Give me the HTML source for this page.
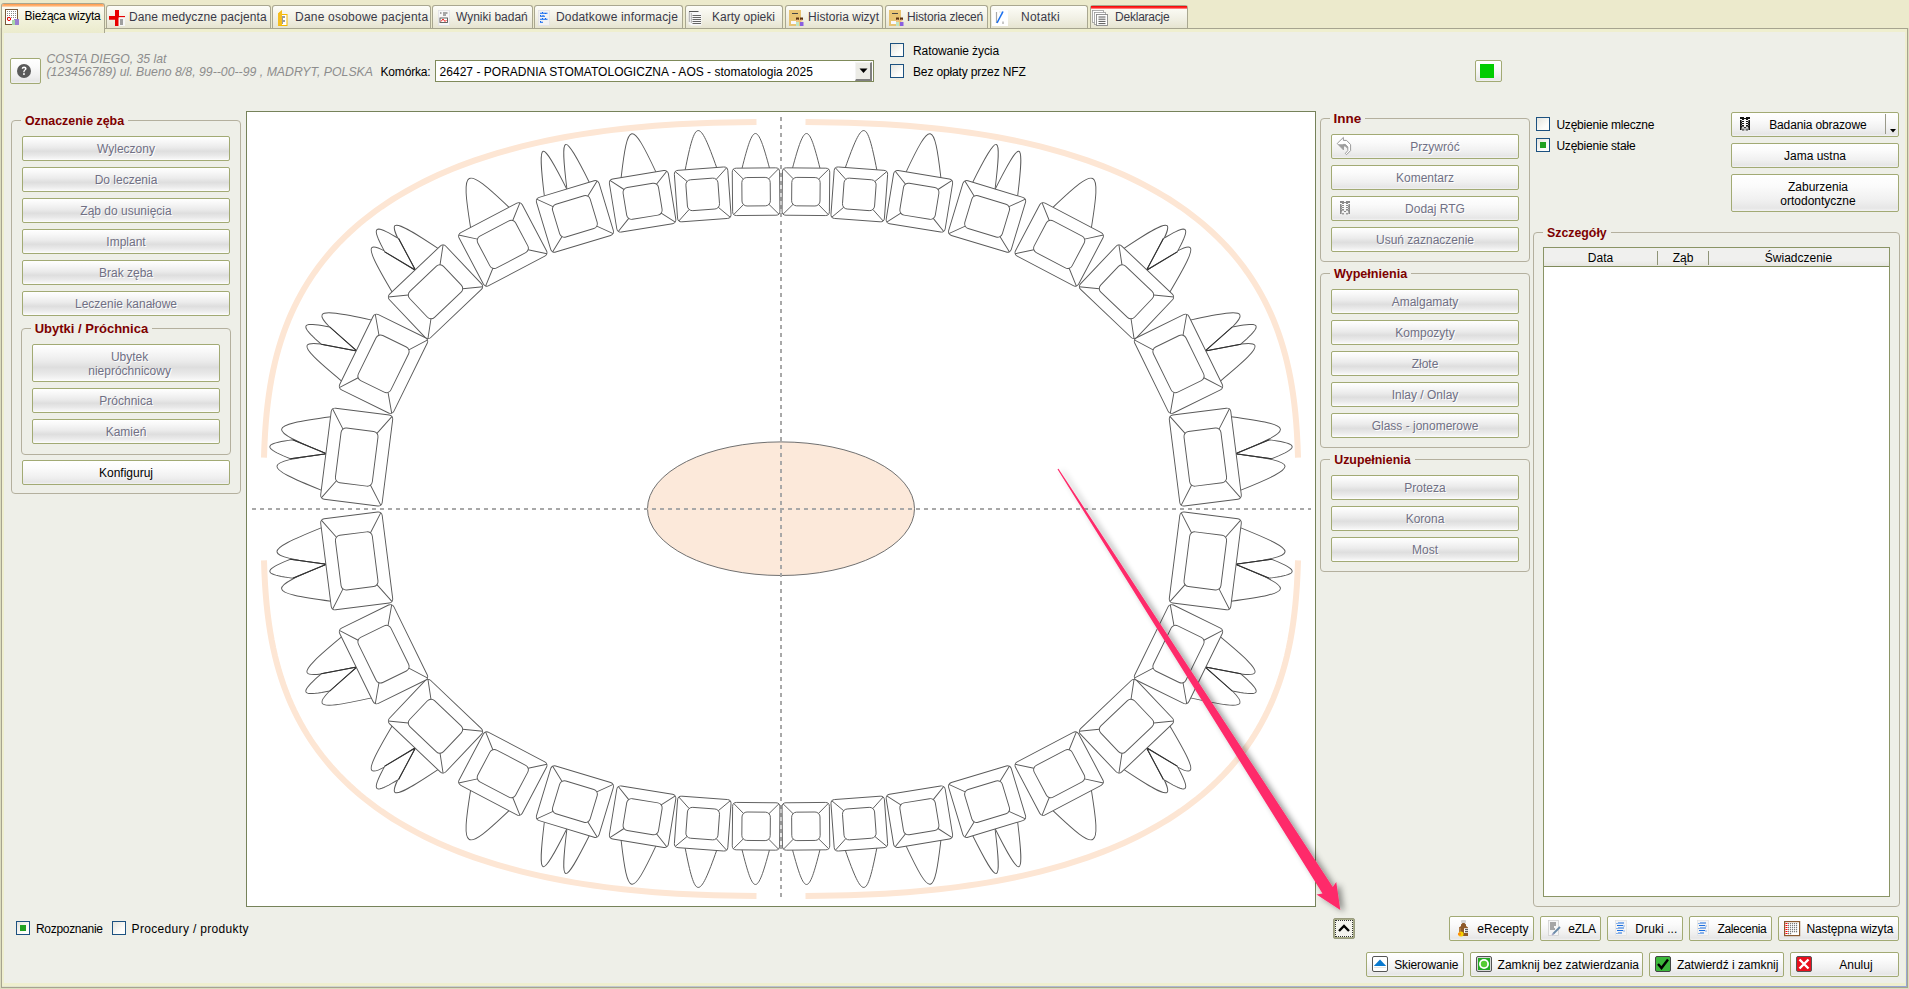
<!DOCTYPE html><html><head><meta charset="utf-8"><style>

*{margin:0;padding:0}
html,body{width:1909px;height:989px;overflow:hidden;background:#dcdcbe;font-family:"Liberation Sans", sans-serif}
.t{position:absolute;white-space:nowrap}
.strip{position:absolute;left:0;top:0;width:1909px;height:28px;background:#eceacc}
.frame{position:absolute;left:1px;top:28px;width:1907px;height:960px;box-sizing:border-box;border:1px solid #a6a48f;background:#efefcf}
.content{position:absolute;left:4px;top:32px;width:1901px;height:951px;background:#eeefe8}
.tab{position:absolute;box-sizing:border-box;border:1px solid #a9a790;border-bottom:none;border-radius:3px 3px 0 0;background:linear-gradient(#fdfdf8,#f0efe3 60%,#e6e4d0)}
.tabact{position:absolute;box-sizing:border-box;border:1px solid #a9a790;border-bottom:none;border-radius:3px 3px 0 0;background:linear-gradient(#fbfbf4 10%,#f2f2dc 50%,#ebebcd)}
.grp{position:absolute;box-sizing:border-box;border:1px solid #b4b09e;border-radius:4px}
.btn{position:absolute;box-sizing:border-box;border:1px solid #a2aa74;border-radius:2px}
.btn.dis{background:linear-gradient(#ffffff 0%,#f7f7f7 20%,#ebebeb 45%,#dedede 62%,#e9e9e9 80%,#f6f6f6 95%,#fff 100%)}
.btn.en{background:linear-gradient(#ffffff 0%,#fbfbfb 30%,#f0f0f0 70%,#e6e6e6 92%,#f2f2f2 100%)}
.chk{position:absolute;box-sizing:border-box;border:1px solid #1c5180;background:linear-gradient(135deg,#e4e4de,#fdfdfb 70%)}
.chkg{position:absolute;background:#21a121}
.white{position:absolute;box-sizing:border-box;border:1px solid #76825a;background:#fff}

</style></head><body>
<div class="strip"></div>
<div class="frame"></div>
<div class="content"></div>
<div style="position:absolute;left:2px;top:986px;width:1905px;height:1px;background:linear-gradient(90deg,rgba(150,165,210,0.15),rgba(150,165,210,0.6) 40%,#98a6d4)"></div>
<div style="position:absolute;left:1906px;top:300px;width:1px;height:687px;background:linear-gradient(rgba(150,165,210,0),#98a6d4)"></div>
<div class="tabact" style="left:1px;top:3px;width:104px;height:30px;"></div>
<div class="" style="left:2px;top:4px;width:102px;height:3px;position:absolute;background:linear-gradient(#ff9848,#ffb070 50%,#ffe0c0);border-radius:2px 2px 0 0"></div>
<div class="t" style="left:24.5px;top:9px;font-size:12px;line-height:14.4px;color:#000;font-weight:normal;font-style:normal;letter-spacing:-0.241px;">Bieżąca wizyta</div>
<div class="tab" style="left:106px;top:5px;width:165px;height:23px;"></div>
<div class="t" style="left:129px;top:10px;font-size:12px;line-height:14.4px;color:#3a3a48;font-weight:normal;font-style:normal;letter-spacing:0.104px;">Dane medyczne pacjenta</div>
<div class="tab" style="left:272px;top:5px;width:159px;height:23px;"></div>
<div class="t" style="left:295px;top:10px;font-size:12px;line-height:14.4px;color:#3a3a48;font-weight:normal;font-style:normal;letter-spacing:0.216px;">Dane osobowe pacjenta</div>
<div class="tab" style="left:432px;top:5px;width:101px;height:23px;"></div>
<div class="t" style="left:456px;top:10px;font-size:12px;line-height:14.4px;color:#3a3a48;font-weight:normal;font-style:normal;letter-spacing:-0.02px;">Wyniki badań</div>
<div class="tab" style="left:534px;top:5px;width:149px;height:23px;"></div>
<div class="t" style="left:556px;top:10px;font-size:12px;line-height:14.4px;color:#3a3a48;font-weight:normal;font-style:normal;letter-spacing:0.163px;">Dodatkowe informacje</div>
<div class="tab" style="left:685px;top:5px;width:98px;height:23px;"></div>
<div class="t" style="left:712px;top:10px;font-size:12px;line-height:14.4px;color:#3a3a48;font-weight:normal;font-style:normal;letter-spacing:0.025px;">Karty opieki</div>
<div class="tab" style="left:785px;top:5px;width:98px;height:23px;"></div>
<div class="t" style="left:808px;top:10px;font-size:12px;line-height:14.4px;color:#3a3a48;font-weight:normal;font-style:normal;letter-spacing:0.022px;">Historia wizyt</div>
<div class="tab" style="left:885px;top:5px;width:103px;height:23px;"></div>
<div class="t" style="left:907px;top:10px;font-size:12px;line-height:14.4px;color:#3a3a48;font-weight:normal;font-style:normal;letter-spacing:-0.18px;">Historia zleceń</div>
<div class="tab" style="left:990px;top:5px;width:98px;height:23px;"></div>
<div class="t" style="left:1021px;top:10px;font-size:12px;line-height:14.4px;color:#3a3a48;font-weight:normal;font-style:normal;letter-spacing:0.234px;">Notatki</div>
<div class="tab" style="left:1090px;top:5px;width:98px;height:23px;"></div>
<div class="" style="left:1091px;top:6px;width:96px;height:3px;position:absolute;background:linear-gradient(#f00000,#ff3030 60%,#ffb0b0)"></div>
<div class="t" style="left:1115px;top:10px;font-size:12px;line-height:14.4px;color:#3a3a48;font-weight:normal;font-style:normal;letter-spacing:-0.22px;">Deklaracje</div>
<div class="btn en" style="left:10px;top:58px;width:31px;height:26px;"></div>
<svg style="position:absolute;left:16px;top:63px" width="16" height="16"><circle cx="8" cy="8" r="7" fill="#5a5a5a"/><path d="M5.6 5.6Q5.8 3.4 8.1 3.4Q10.6 3.4 10.6 5.6Q10.6 6.9 9.2 7.6Q8.6 8 8.6 9.2H7.2Q7.2 7.5 8.1 6.9Q8.9 6.4 8.9 5.7Q8.9 4.9 8 4.9Q7.2 4.9 7.1 5.9Z" fill="#fff"/><rect x="7.1" y="10.2" width="1.7" height="1.7" fill="#fff"/></svg>
<div class="t" style="left:46.5px;top:52px;font-size:12.2px;line-height:14.64px;color:#8d8d8d;font-weight:normal;font-style:italic;">COSTA DIEGO, 35 lat</div>
<div class="t" style="left:46.5px;top:65px;font-size:12.3px;line-height:14.76px;color:#8d8d8d;font-weight:normal;font-style:italic;">(123456789) ul. Bueno 8/8, 99--00--99 , MADRYT, POLSKA</div>
<div class="t" style="left:380.5px;top:65px;font-size:12px;line-height:14.4px;color:#000;font-weight:normal;font-style:normal;letter-spacing:-0.17px;">Komórka:</div>
<div style="position:absolute;left:435px;top:60px;width:439px;height:22px;box-sizing:border-box;border:1px solid #7f8a5a;background:#fff"></div>
<div class="t" style="left:439.6px;top:65px;font-size:12px;line-height:14.4px;color:#000;font-weight:normal;font-style:normal;letter-spacing:0.02px;">26427 - PORADNIA STOMATOLOGICZNA - AOS - stomatologia 2025</div>
<div style="position:absolute;left:855px;top:62px;width:17px;height:19px;box-sizing:border-box;border-top:1px solid #f4f4f4;border-left:1px solid #f4f4f4;border-right:2px solid #808080;border-bottom:2px solid #808080;background:#ecece6"></div>
<svg style="position:absolute;left:859px;top:68px" width="10" height="6"><path d="M0.5 0.5H8.5L4.5 5z" fill="#000"/></svg>
<div class="chk" style="left:890px;top:43px;width:14px;height:14px;"></div>
<div class="t" style="left:913px;top:44px;font-size:12px;line-height:14.4px;color:#000;font-weight:normal;font-style:normal;letter-spacing:-0.092px;">Ratowanie życia</div>
<div class="chk" style="left:890px;top:64px;width:14px;height:14px;"></div>
<div class="t" style="left:913px;top:65px;font-size:12px;line-height:14.4px;color:#000;font-weight:normal;font-style:normal;letter-spacing:-0.139px;">Bez opłaty przez NFZ</div>
<div class="btn en" style="left:1475px;top:60px;width:27px;height:22px;"></div>
<div class="" style="left:1480px;top:64px;width:14px;height:14px;position:absolute;background:#00cc00"></div>
<div class="grp" style="left:11px;top:120px;width:230px;height:374px;"></div>
<div class="t" style="left:24.9px;top:114px;font-size:12.4px;line-height:14.88px;color:#7d0000;font-weight:bold;font-style:normal;background:#eeefe8;padding:0 4px;margin-left:-4px;">Oznaczenie zęba</div>
<div class="btn dis" style="left:22px;top:136px;width:208px;height:25px;"></div>
<div class="t" style="left:-74px;top:142px;width:400px;text-align:center;font-size:12px;line-height:14.4px;color:#707084;font-weight:normal;text-shadow:1px 1px 0 #fff;">Wyleczony</div>
<div class="btn dis" style="left:22px;top:167px;width:208px;height:25px;"></div>
<div class="t" style="left:-74px;top:173px;width:400px;text-align:center;font-size:12px;line-height:14.4px;color:#707084;font-weight:normal;text-shadow:1px 1px 0 #fff;">Do leczenia</div>
<div class="btn dis" style="left:22px;top:198px;width:208px;height:25px;"></div>
<div class="t" style="left:-74px;top:204px;width:400px;text-align:center;font-size:12px;line-height:14.4px;color:#707084;font-weight:normal;text-shadow:1px 1px 0 #fff;">Ząb do usunięcia</div>
<div class="btn dis" style="left:22px;top:229px;width:208px;height:25px;"></div>
<div class="t" style="left:-74px;top:235px;width:400px;text-align:center;font-size:12px;line-height:14.4px;color:#707084;font-weight:normal;text-shadow:1px 1px 0 #fff;">Implant</div>
<div class="btn dis" style="left:22px;top:260px;width:208px;height:25px;"></div>
<div class="t" style="left:-74px;top:266px;width:400px;text-align:center;font-size:12px;line-height:14.4px;color:#707084;font-weight:normal;text-shadow:1px 1px 0 #fff;">Brak zęba</div>
<div class="btn dis" style="left:22px;top:291px;width:208px;height:25px;"></div>
<div class="t" style="left:-74px;top:297px;width:400px;text-align:center;font-size:12px;line-height:14.4px;color:#707084;font-weight:normal;text-shadow:1px 1px 0 #fff;">Leczenie kanałowe</div>
<div class="grp" style="left:21px;top:328px;width:210px;height:127px;"></div>
<div class="t" style="left:34.7px;top:321px;font-size:13px;line-height:15.6px;color:#7d0000;font-weight:bold;font-style:normal;background:#eeefe8;padding:0 4px;margin-left:-4px;">Ubytki / Próchnica</div>
<div class="btn dis" style="left:32px;top:344px;width:188px;height:38px;"></div>
<div class="t" style="left:-70.4px;top:350px;width:400px;text-align:center;font-size:12px;line-height:14.4px;color:#707084;font-weight:normal;text-shadow:1px 1px 0 #fff;">Ubytek</div>
<div class="t" style="left:-70.4px;top:364px;width:400px;text-align:center;font-size:12px;line-height:14.4px;color:#707084;font-weight:normal;text-shadow:1px 1px 0 #fff;">niepróchnicowy</div>
<div class="btn dis" style="left:32px;top:388px;width:188px;height:25px;"></div>
<div class="t" style="left:-74px;top:394px;width:400px;text-align:center;font-size:12px;line-height:14.4px;color:#707084;font-weight:normal;text-shadow:1px 1px 0 #fff;">Próchnica</div>
<div class="btn dis" style="left:32px;top:419px;width:188px;height:25px;"></div>
<div class="t" style="left:-74px;top:425px;width:400px;text-align:center;font-size:12px;line-height:14.4px;color:#707084;font-weight:normal;text-shadow:1px 1px 0 #fff;">Kamień</div>
<div class="btn en" style="left:22px;top:460px;width:208px;height:25px;"></div>
<div class="t" style="left:-74px;top:466px;width:400px;text-align:center;font-size:12px;line-height:14.4px;color:#000;font-weight:normal;">Konfiguruj</div>
<div class="white" style="left:246px;top:111px;width:1070px;height:796px"></div>
<svg width="1909" height="989" style="position:absolute;left:0;top:0" viewBox="0 0 1909 989">
<style>.teeth path,.teeth rect{fill:#fff;stroke:#5a5a5a;stroke-width:0.95}.teeth .cl{fill:none}.teeth .mid{stroke:#303030;stroke-width:1;fill:none}</style>
<defs><filter id="sh" x="-20%" y="-20%" width="140%" height="140%"><feGaussianBlur in="SourceAlpha" stdDeviation="2.2"/><feOffset dx="3" dy="1" result="o"/><feComponentTransfer><feFuncA type="linear" slope="0.55"/></feComponentTransfer><feMerge><feMergeNode/><feMergeNode in="SourceGraphic"/></feMerge></filter></defs>
<path d="M263.99 457.6L264.43 445.08L265.03 433.7L265.77 423.14L266.65 413.22L267.68 403.81L268.86 394.82L270.18 386.21L271.64 377.91L273.25 369.89L275 362.14L276.9 354.61L278.94 347.31L281.13 340.2L283.45 333.27L285.92 326.52L288.54 319.93L291.29 313.51L294.19 307.22L297.23 301.09L300.41 295.09L303.73 289.22L307.19 283.48L310.79 277.87L314.53 272.37L318.41 267L322.43 261.73L326.58 256.59L330.88 251.55L335.31 246.62L339.87 241.8L344.58 237.08L349.42 232.47L354.39 227.96L359.5 223.55L364.75 219.24L370.13 215.03L375.64 210.92L381.28 206.9L387.06 202.99L392.97 199.16L399.02 195.44L405.19 191.81L411.5 188.27L417.93 184.83L424.5 181.48L431.2 178.23L438.04 175.07L445 172L452.09 169.03L459.32 166.14L466.68 163.35L474.17 160.65L481.79 158.04L489.54 155.53L497.43 153.1L505.46 150.77L513.62 148.53L521.93 146.38L530.37 144.32L538.95 142.35L547.68 140.47L556.56 138.69L565.6 136.99L574.79 135.39L584.14 133.87L593.66 132.45L603.35 131.12L613.23 129.88L623.31 128.73L633.6 127.67L644.11 126.7L654.86 125.82L665.89 125.03L677.22 124.34L688.9 123.73L700.99 123.22L713.58 122.79L726.82 122.46L740.94 122.22L756.5 122.06" fill="none" stroke="#fde6d4" stroke-width="6"/>
<path d="M263.99 457.6L264.43 445.08L265.03 433.7L265.77 423.14L266.65 413.22L267.68 403.81L268.86 394.82L270.18 386.21L271.64 377.91L273.25 369.89L275 362.14L276.9 354.61L278.94 347.31L281.13 340.2L283.45 333.27L285.92 326.52L288.54 319.93L291.29 313.51L294.19 307.22L297.23 301.09L300.41 295.09L303.73 289.22L307.19 283.48L310.79 277.87L314.53 272.37L318.41 267L322.43 261.73L326.58 256.59L330.88 251.55L335.31 246.62L339.87 241.8L344.58 237.08L349.42 232.47L354.39 227.96L359.5 223.55L364.75 219.24L370.13 215.03L375.64 210.92L381.28 206.9L387.06 202.99L392.97 199.16L399.02 195.44L405.19 191.81L411.5 188.27L417.93 184.83L424.5 181.48L431.2 178.23L438.04 175.07L445 172L452.09 169.03L459.32 166.14L466.68 163.35L474.17 160.65L481.79 158.04L489.54 155.53L497.43 153.1L505.46 150.77L513.62 148.53L521.93 146.38L530.37 144.32L538.95 142.35L547.68 140.47L556.56 138.69L565.6 136.99L574.79 135.39L584.14 133.87L593.66 132.45L603.35 131.12L613.23 129.88L623.31 128.73L633.6 127.67L644.11 126.7L654.86 125.82L665.89 125.03L677.22 124.34L688.9 123.73L700.99 123.22L713.58 122.79L726.82 122.46L740.94 122.22L756.5 122.06" fill="none" stroke="#fde6d4" stroke-width="6" transform="matrix(-1 0 0 1 1562 0)"/>
<path d="M263.99 457.6L264.43 445.08L265.03 433.7L265.77 423.14L266.65 413.22L267.68 403.81L268.86 394.82L270.18 386.21L271.64 377.91L273.25 369.89L275 362.14L276.9 354.61L278.94 347.31L281.13 340.2L283.45 333.27L285.92 326.52L288.54 319.93L291.29 313.51L294.19 307.22L297.23 301.09L300.41 295.09L303.73 289.22L307.19 283.48L310.79 277.87L314.53 272.37L318.41 267L322.43 261.73L326.58 256.59L330.88 251.55L335.31 246.62L339.87 241.8L344.58 237.08L349.42 232.47L354.39 227.96L359.5 223.55L364.75 219.24L370.13 215.03L375.64 210.92L381.28 206.9L387.06 202.99L392.97 199.16L399.02 195.44L405.19 191.81L411.5 188.27L417.93 184.83L424.5 181.48L431.2 178.23L438.04 175.07L445 172L452.09 169.03L459.32 166.14L466.68 163.35L474.17 160.65L481.79 158.04L489.54 155.53L497.43 153.1L505.46 150.77L513.62 148.53L521.93 146.38L530.37 144.32L538.95 142.35L547.68 140.47L556.56 138.69L565.6 136.99L574.79 135.39L584.14 133.87L593.66 132.45L603.35 131.12L613.23 129.88L623.31 128.73L633.6 127.67L644.11 126.7L654.86 125.82L665.89 125.03L677.22 124.34L688.9 123.73L700.99 123.22L713.58 122.79L726.82 122.46L740.94 122.22L756.5 122.06" fill="none" stroke="#fde6d4" stroke-width="6" transform="matrix(1 0 0 -1 0 1018)"/>
<path d="M263.99 457.6L264.43 445.08L265.03 433.7L265.77 423.14L266.65 413.22L267.68 403.81L268.86 394.82L270.18 386.21L271.64 377.91L273.25 369.89L275 362.14L276.9 354.61L278.94 347.31L281.13 340.2L283.45 333.27L285.92 326.52L288.54 319.93L291.29 313.51L294.19 307.22L297.23 301.09L300.41 295.09L303.73 289.22L307.19 283.48L310.79 277.87L314.53 272.37L318.41 267L322.43 261.73L326.58 256.59L330.88 251.55L335.31 246.62L339.87 241.8L344.58 237.08L349.42 232.47L354.39 227.96L359.5 223.55L364.75 219.24L370.13 215.03L375.64 210.92L381.28 206.9L387.06 202.99L392.97 199.16L399.02 195.44L405.19 191.81L411.5 188.27L417.93 184.83L424.5 181.48L431.2 178.23L438.04 175.07L445 172L452.09 169.03L459.32 166.14L466.68 163.35L474.17 160.65L481.79 158.04L489.54 155.53L497.43 153.1L505.46 150.77L513.62 148.53L521.93 146.38L530.37 144.32L538.95 142.35L547.68 140.47L556.56 138.69L565.6 136.99L574.79 135.39L584.14 133.87L593.66 132.45L603.35 131.12L613.23 129.88L623.31 128.73L633.6 127.67L644.11 126.7L654.86 125.82L665.89 125.03L677.22 124.34L688.9 123.73L700.99 123.22L713.58 122.79L726.82 122.46L740.94 122.22L756.5 122.06" fill="none" stroke="#fde6d4" stroke-width="6" transform="matrix(-1 0 0 -1 1562 1018)"/>
<ellipse cx="781" cy="508.7" rx="133.5" ry="66.8" fill="#fce9da" stroke="#707070" stroke-width="1"/>
<line x1="252" y1="509" x2="1311" y2="509" stroke="#a8a8a8" stroke-width="2" stroke-dasharray="4 4"/>
<line x1="781" y1="117" x2="781" y2="897" stroke="#a8a8a8" stroke-width="2" stroke-dasharray="4 4"/>
<g class="teeth">
<g><g transform="translate(756.1 191.7) rotate(-0.5)"><g class="root"><path d="M-13.95 -23.2C-1.95 -69.87 1.65 -69.87 13.65 -23.2"/></g><g class="crown"><rect x="-23.65" y="-23.7" width="47.3" height="47.4" rx="4"/><rect x="-14.19" y="-14.22" width="28.38" height="28.44" rx="5"/><path class="cl" d="M-22.65 -22.7L-12.69 -12.72M-22.65 22.7L-12.69 12.72M22.65 -22.7L12.69 -12.72M22.65 22.7L12.69 12.72"/></g></g><g transform="translate(702.7 194.4) rotate(-4.2)"><g class="root"><path d="M-15.8 -25.3C-1.7 -76.9 1.9 -76.9 16 -25.3"/></g><g class="crown"><rect x="-26.8" y="-25.8" width="53.6" height="51.6" rx="4"/><rect x="-16.08" y="-15.48" width="32.16" height="30.96" rx="5"/><path class="cl" d="M-25.8 -24.8L-14.58 -13.98M-25.8 24.8L-14.58 13.98M25.8 -24.8L14.58 -13.98M25.8 24.8L14.58 13.98"/></g></g><g transform="translate(642.6 201.3) rotate(-9.3)"><g class="root"><path d="M-17.5 -26.4C-1.55 -82.4 2.05 -82.4 18 -26.4"/></g><g class="crown"><rect x="-29.9" y="-26.9" width="59.8" height="53.8" rx="4"/><rect x="-17.94" y="-16.14" width="35.88" height="32.28" rx="5"/><path class="cl" d="M-28.9 -25.9L-16.44 -14.64M-28.9 25.9L-16.44 14.64M28.9 -25.9L16.44 -14.64M28.9 25.9L16.44 14.64"/></g></g><g transform="translate(574.9 216.4) rotate(-16.8)"><g class="root"><path d="M-23.4 -28.05C-13.4 -86.05 -9.8 -86.05 0.2 -28.05"/><path d="M0.2 -28.05C10.15 -86.05 13.75 -86.05 23.7 -28.05"/></g><g class="crown"><rect x="-32.7" y="-28.55" width="65.4" height="57.1" rx="4"/><rect x="-19.62" y="-17.13" width="39.24" height="34.26" rx="5"/><path class="cl" d="M-31.7 -27.55L-18.12 -15.63M-31.7 27.55L-18.12 15.63M31.7 -27.55L18.12 -15.63M31.7 27.55L18.12 15.63"/></g></g><g transform="translate(502.8 244.4) rotate(-27.8)"><g class="root"><path d="M-20.8 -29.45C-0.75 -88.78 2.85 -88.78 22.9 -29.45"/></g><g class="crown"><rect x="-35.7" y="-29.95" width="71.4" height="59.9" rx="4"/><rect x="-21.42" y="-17.97" width="42.84" height="35.94" rx="5"/><path class="cl" d="M-34.7 -28.95L-19.92 -16.47M-34.7 28.95L-19.92 16.47M34.7 -28.95L19.92 -16.47M34.7 28.95L19.92 16.47"/></g></g><g transform="translate(435.5 291.8) rotate(-43.5)"><g class="root"><path d="M-31.7 -29.4C-17.5 -91.4 -13.9 -91.4 0.3 -29.4"/><path d="M0.3 -29.4C14.25 -91.4 17.85 -91.4 31.8 -29.4"/><path d="M0.3 -29.4L-9.29 -63.87L-8.16 -67.96L-7.09 -71.62L-6.06 -74.85L-5.07 -77.65L-4.12 -80.02L-3.2 -81.96L-2.31 -83.46L-1.43 -84.54L-0.56 -85.18L0.3 -85.4L1.16 -85.18L2.03 -84.54L2.91 -83.46L3.8 -81.96L4.72 -80.02L5.67 -77.65L6.66 -74.85L7.69 -71.62L8.76 -67.96L9.89 -63.87Z"/><path class="mid" d="M-9.29 -63.87L0.3 -29.4M0.3 -29.4L9.89 -63.87"/></g><g class="crown"><rect x="-38.9" y="-29.9" width="77.8" height="59.8" rx="4"/><rect x="-23.34" y="-17.94" width="46.68" height="35.88" rx="5"/><path class="cl" d="M-37.9 -28.9L-21.84 -16.44M-37.9 28.9L-21.84 16.44M37.9 -28.9L21.84 -16.44M37.9 28.9L21.84 16.44"/></g></g><g transform="translate(383.5 363.8) rotate(-63.9)"><g class="root"><path d="M-34 -29.7C-18.9 -92.37 -15.3 -92.37 -0.2 -29.7"/><path d="M-0.2 -29.7C15.15 -92.37 18.75 -92.37 34.1 -29.7"/><path d="M-0.2 -29.7L-9.79 -64.48L-8.66 -68.61L-7.59 -72.3L-6.56 -75.56L-5.57 -78.38L-4.62 -80.77L-3.7 -82.73L-2.81 -84.25L-1.93 -85.33L-1.06 -85.98L-0.2 -86.2L0.66 -85.98L1.53 -85.33L2.41 -84.25L3.3 -82.73L4.22 -80.77L5.17 -78.38L6.16 -75.56L7.19 -72.3L8.26 -68.61L9.39 -64.48Z"/><path class="mid" d="M-9.79 -64.48L-0.2 -29.7M-0.2 -29.7L9.39 -64.48"/></g><g class="crown"><rect x="-41.9" y="-30.2" width="83.8" height="60.4" rx="4"/><rect x="-25.14" y="-18.12" width="50.28" height="36.24" rx="5"/><path class="cl" d="M-40.9 -29.2L-23.64 -16.62M-40.9 29.2L-23.64 16.62M40.9 -29.2L23.64 -16.62M40.9 29.2L23.64 16.62"/></g></g><g transform="translate(356.7 457.1) rotate(-82.8)"><g class="root"><path d="M-37.4 -30.5C-20.7 -93.83 -17.1 -93.83 -0.4 -30.5"/><path d="M-0.4 -30.5C16.4 -93.83 20 -93.83 36.8 -30.5"/><path d="M-0.4 -30.5L-9.99 -65.59L-8.86 -69.75L-7.79 -73.48L-6.76 -76.76L-5.77 -79.61L-4.82 -82.02L-3.9 -83.99L-3.01 -85.53L-2.13 -86.62L-1.26 -87.28L-0.4 -87.5L0.46 -87.28L1.33 -86.62L2.21 -85.53L3.1 -83.99L4.02 -82.02L4.97 -79.61L5.96 -76.76L6.99 -73.48L8.06 -69.75L9.19 -65.59Z"/><path class="mid" d="M-9.99 -65.59L-0.4 -30.5M-0.4 -30.5L9.19 -65.59"/></g><g class="crown"><rect x="-45.9" y="-31" width="91.8" height="62" rx="4"/><rect x="-27.54" y="-18.6" width="55.08" height="37.2" rx="5"/><path class="cl" d="M-44.9 -30L-26.04 -17.1M-44.9 30L-26.04 17.1M44.9 -30L26.04 -17.1M44.9 30L26.04 17.1"/></g></g></g>
<g transform="matrix(-1 0 0 1 1562 0)"><g transform="translate(756.1 191.7) rotate(-0.5)"><g class="root"><path d="M-13.95 -23.2C-1.95 -69.87 1.65 -69.87 13.65 -23.2"/></g><g class="crown"><rect x="-23.65" y="-23.7" width="47.3" height="47.4" rx="4"/><rect x="-14.19" y="-14.22" width="28.38" height="28.44" rx="5"/><path class="cl" d="M-22.65 -22.7L-12.69 -12.72M-22.65 22.7L-12.69 12.72M22.65 -22.7L12.69 -12.72M22.65 22.7L12.69 12.72"/></g></g><g transform="translate(702.7 194.4) rotate(-4.2)"><g class="root"><path d="M-15.8 -25.3C-1.7 -76.9 1.9 -76.9 16 -25.3"/></g><g class="crown"><rect x="-26.8" y="-25.8" width="53.6" height="51.6" rx="4"/><rect x="-16.08" y="-15.48" width="32.16" height="30.96" rx="5"/><path class="cl" d="M-25.8 -24.8L-14.58 -13.98M-25.8 24.8L-14.58 13.98M25.8 -24.8L14.58 -13.98M25.8 24.8L14.58 13.98"/></g></g><g transform="translate(642.6 201.3) rotate(-9.3)"><g class="root"><path d="M-17.5 -26.4C-1.55 -82.4 2.05 -82.4 18 -26.4"/></g><g class="crown"><rect x="-29.9" y="-26.9" width="59.8" height="53.8" rx="4"/><rect x="-17.94" y="-16.14" width="35.88" height="32.28" rx="5"/><path class="cl" d="M-28.9 -25.9L-16.44 -14.64M-28.9 25.9L-16.44 14.64M28.9 -25.9L16.44 -14.64M28.9 25.9L16.44 14.64"/></g></g><g transform="translate(574.9 216.4) rotate(-16.8)"><g class="root"><path d="M-23.4 -28.05C-13.4 -86.05 -9.8 -86.05 0.2 -28.05"/><path d="M0.2 -28.05C10.15 -86.05 13.75 -86.05 23.7 -28.05"/></g><g class="crown"><rect x="-32.7" y="-28.55" width="65.4" height="57.1" rx="4"/><rect x="-19.62" y="-17.13" width="39.24" height="34.26" rx="5"/><path class="cl" d="M-31.7 -27.55L-18.12 -15.63M-31.7 27.55L-18.12 15.63M31.7 -27.55L18.12 -15.63M31.7 27.55L18.12 15.63"/></g></g><g transform="translate(502.8 244.4) rotate(-27.8)"><g class="root"><path d="M-20.8 -29.45C-0.75 -88.78 2.85 -88.78 22.9 -29.45"/></g><g class="crown"><rect x="-35.7" y="-29.95" width="71.4" height="59.9" rx="4"/><rect x="-21.42" y="-17.97" width="42.84" height="35.94" rx="5"/><path class="cl" d="M-34.7 -28.95L-19.92 -16.47M-34.7 28.95L-19.92 16.47M34.7 -28.95L19.92 -16.47M34.7 28.95L19.92 16.47"/></g></g><g transform="translate(435.5 291.8) rotate(-43.5)"><g class="root"><path d="M-31.7 -29.4C-17.5 -91.4 -13.9 -91.4 0.3 -29.4"/><path d="M0.3 -29.4C14.25 -91.4 17.85 -91.4 31.8 -29.4"/><path d="M0.3 -29.4L-9.29 -63.87L-8.16 -67.96L-7.09 -71.62L-6.06 -74.85L-5.07 -77.65L-4.12 -80.02L-3.2 -81.96L-2.31 -83.46L-1.43 -84.54L-0.56 -85.18L0.3 -85.4L1.16 -85.18L2.03 -84.54L2.91 -83.46L3.8 -81.96L4.72 -80.02L5.67 -77.65L6.66 -74.85L7.69 -71.62L8.76 -67.96L9.89 -63.87Z"/><path class="mid" d="M-9.29 -63.87L0.3 -29.4M0.3 -29.4L9.89 -63.87"/></g><g class="crown"><rect x="-38.9" y="-29.9" width="77.8" height="59.8" rx="4"/><rect x="-23.34" y="-17.94" width="46.68" height="35.88" rx="5"/><path class="cl" d="M-37.9 -28.9L-21.84 -16.44M-37.9 28.9L-21.84 16.44M37.9 -28.9L21.84 -16.44M37.9 28.9L21.84 16.44"/></g></g><g transform="translate(383.5 363.8) rotate(-63.9)"><g class="root"><path d="M-34 -29.7C-18.9 -92.37 -15.3 -92.37 -0.2 -29.7"/><path d="M-0.2 -29.7C15.15 -92.37 18.75 -92.37 34.1 -29.7"/><path d="M-0.2 -29.7L-9.79 -64.48L-8.66 -68.61L-7.59 -72.3L-6.56 -75.56L-5.57 -78.38L-4.62 -80.77L-3.7 -82.73L-2.81 -84.25L-1.93 -85.33L-1.06 -85.98L-0.2 -86.2L0.66 -85.98L1.53 -85.33L2.41 -84.25L3.3 -82.73L4.22 -80.77L5.17 -78.38L6.16 -75.56L7.19 -72.3L8.26 -68.61L9.39 -64.48Z"/><path class="mid" d="M-9.79 -64.48L-0.2 -29.7M-0.2 -29.7L9.39 -64.48"/></g><g class="crown"><rect x="-41.9" y="-30.2" width="83.8" height="60.4" rx="4"/><rect x="-25.14" y="-18.12" width="50.28" height="36.24" rx="5"/><path class="cl" d="M-40.9 -29.2L-23.64 -16.62M-40.9 29.2L-23.64 16.62M40.9 -29.2L23.64 -16.62M40.9 29.2L23.64 16.62"/></g></g><g transform="translate(356.7 457.1) rotate(-82.8)"><g class="root"><path d="M-37.4 -30.5C-20.7 -93.83 -17.1 -93.83 -0.4 -30.5"/><path d="M-0.4 -30.5C16.4 -93.83 20 -93.83 36.8 -30.5"/><path d="M-0.4 -30.5L-9.99 -65.59L-8.86 -69.75L-7.79 -73.48L-6.76 -76.76L-5.77 -79.61L-4.82 -82.02L-3.9 -83.99L-3.01 -85.53L-2.13 -86.62L-1.26 -87.28L-0.4 -87.5L0.46 -87.28L1.33 -86.62L2.21 -85.53L3.1 -83.99L4.02 -82.02L4.97 -79.61L5.96 -76.76L6.99 -73.48L8.06 -69.75L9.19 -65.59Z"/><path class="mid" d="M-9.99 -65.59L-0.4 -30.5M-0.4 -30.5L9.19 -65.59"/></g><g class="crown"><rect x="-45.9" y="-31" width="91.8" height="62" rx="4"/><rect x="-27.54" y="-18.6" width="55.08" height="37.2" rx="5"/><path class="cl" d="M-44.9 -30L-26.04 -17.1M-44.9 30L-26.04 17.1M44.9 -30L26.04 -17.1M44.9 30L26.04 17.1"/></g></g></g>
<g transform="matrix(1 0 0 -1 0 1018)"><g transform="translate(756.1 191.7) rotate(-0.5)"><g class="root"><path d="M-13.95 -23.2C-1.95 -69.87 1.65 -69.87 13.65 -23.2"/></g><g class="crown"><rect x="-23.65" y="-23.7" width="47.3" height="47.4" rx="4"/><rect x="-14.19" y="-14.22" width="28.38" height="28.44" rx="5"/><path class="cl" d="M-22.65 -22.7L-12.69 -12.72M-22.65 22.7L-12.69 12.72M22.65 -22.7L12.69 -12.72M22.65 22.7L12.69 12.72"/></g></g><g transform="translate(702.7 194.4) rotate(-4.2)"><g class="root"><path d="M-15.8 -25.3C-1.7 -76.9 1.9 -76.9 16 -25.3"/></g><g class="crown"><rect x="-26.8" y="-25.8" width="53.6" height="51.6" rx="4"/><rect x="-16.08" y="-15.48" width="32.16" height="30.96" rx="5"/><path class="cl" d="M-25.8 -24.8L-14.58 -13.98M-25.8 24.8L-14.58 13.98M25.8 -24.8L14.58 -13.98M25.8 24.8L14.58 13.98"/></g></g><g transform="translate(642.6 201.3) rotate(-9.3)"><g class="root"><path d="M-17.5 -26.4C-1.55 -82.4 2.05 -82.4 18 -26.4"/></g><g class="crown"><rect x="-29.9" y="-26.9" width="59.8" height="53.8" rx="4"/><rect x="-17.94" y="-16.14" width="35.88" height="32.28" rx="5"/><path class="cl" d="M-28.9 -25.9L-16.44 -14.64M-28.9 25.9L-16.44 14.64M28.9 -25.9L16.44 -14.64M28.9 25.9L16.44 14.64"/></g></g><g transform="translate(574.9 216.4) rotate(-16.8)"><g class="root"><path d="M-23.4 -28.05C-13.4 -86.05 -9.8 -86.05 0.2 -28.05"/><path d="M0.2 -28.05C10.15 -86.05 13.75 -86.05 23.7 -28.05"/></g><g class="crown"><rect x="-32.7" y="-28.55" width="65.4" height="57.1" rx="4"/><rect x="-19.62" y="-17.13" width="39.24" height="34.26" rx="5"/><path class="cl" d="M-31.7 -27.55L-18.12 -15.63M-31.7 27.55L-18.12 15.63M31.7 -27.55L18.12 -15.63M31.7 27.55L18.12 15.63"/></g></g><g transform="translate(502.8 244.4) rotate(-27.8)"><g class="root"><path d="M-20.8 -29.45C-0.75 -88.78 2.85 -88.78 22.9 -29.45"/></g><g class="crown"><rect x="-35.7" y="-29.95" width="71.4" height="59.9" rx="4"/><rect x="-21.42" y="-17.97" width="42.84" height="35.94" rx="5"/><path class="cl" d="M-34.7 -28.95L-19.92 -16.47M-34.7 28.95L-19.92 16.47M34.7 -28.95L19.92 -16.47M34.7 28.95L19.92 16.47"/></g></g><g transform="translate(435.5 291.8) rotate(-43.5)"><g class="root"><path d="M-31.7 -29.4C-17.5 -91.4 -13.9 -91.4 0.3 -29.4"/><path d="M0.3 -29.4C14.25 -91.4 17.85 -91.4 31.8 -29.4"/><path d="M0.3 -29.4L-9.29 -63.87L-8.16 -67.96L-7.09 -71.62L-6.06 -74.85L-5.07 -77.65L-4.12 -80.02L-3.2 -81.96L-2.31 -83.46L-1.43 -84.54L-0.56 -85.18L0.3 -85.4L1.16 -85.18L2.03 -84.54L2.91 -83.46L3.8 -81.96L4.72 -80.02L5.67 -77.65L6.66 -74.85L7.69 -71.62L8.76 -67.96L9.89 -63.87Z"/><path class="mid" d="M-9.29 -63.87L0.3 -29.4M0.3 -29.4L9.89 -63.87"/></g><g class="crown"><rect x="-38.9" y="-29.9" width="77.8" height="59.8" rx="4"/><rect x="-23.34" y="-17.94" width="46.68" height="35.88" rx="5"/><path class="cl" d="M-37.9 -28.9L-21.84 -16.44M-37.9 28.9L-21.84 16.44M37.9 -28.9L21.84 -16.44M37.9 28.9L21.84 16.44"/></g></g><g transform="translate(383.5 363.8) rotate(-63.9)"><g class="root"><path d="M-34 -29.7C-18.9 -92.37 -15.3 -92.37 -0.2 -29.7"/><path d="M-0.2 -29.7C15.15 -92.37 18.75 -92.37 34.1 -29.7"/><path d="M-0.2 -29.7L-9.79 -64.48L-8.66 -68.61L-7.59 -72.3L-6.56 -75.56L-5.57 -78.38L-4.62 -80.77L-3.7 -82.73L-2.81 -84.25L-1.93 -85.33L-1.06 -85.98L-0.2 -86.2L0.66 -85.98L1.53 -85.33L2.41 -84.25L3.3 -82.73L4.22 -80.77L5.17 -78.38L6.16 -75.56L7.19 -72.3L8.26 -68.61L9.39 -64.48Z"/><path class="mid" d="M-9.79 -64.48L-0.2 -29.7M-0.2 -29.7L9.39 -64.48"/></g><g class="crown"><rect x="-41.9" y="-30.2" width="83.8" height="60.4" rx="4"/><rect x="-25.14" y="-18.12" width="50.28" height="36.24" rx="5"/><path class="cl" d="M-40.9 -29.2L-23.64 -16.62M-40.9 29.2L-23.64 16.62M40.9 -29.2L23.64 -16.62M40.9 29.2L23.64 16.62"/></g></g><g transform="translate(356.7 457.1) rotate(-82.8)"><g class="root"><path d="M-37.4 -30.5C-20.7 -93.83 -17.1 -93.83 -0.4 -30.5"/><path d="M-0.4 -30.5C16.4 -93.83 20 -93.83 36.8 -30.5"/><path d="M-0.4 -30.5L-9.99 -65.59L-8.86 -69.75L-7.79 -73.48L-6.76 -76.76L-5.77 -79.61L-4.82 -82.02L-3.9 -83.99L-3.01 -85.53L-2.13 -86.62L-1.26 -87.28L-0.4 -87.5L0.46 -87.28L1.33 -86.62L2.21 -85.53L3.1 -83.99L4.02 -82.02L4.97 -79.61L5.96 -76.76L6.99 -73.48L8.06 -69.75L9.19 -65.59Z"/><path class="mid" d="M-9.99 -65.59L-0.4 -30.5M-0.4 -30.5L9.19 -65.59"/></g><g class="crown"><rect x="-45.9" y="-31" width="91.8" height="62" rx="4"/><rect x="-27.54" y="-18.6" width="55.08" height="37.2" rx="5"/><path class="cl" d="M-44.9 -30L-26.04 -17.1M-44.9 30L-26.04 17.1M44.9 -30L26.04 -17.1M44.9 30L26.04 17.1"/></g></g></g>
<g transform="matrix(-1 0 0 -1 1562 1018)"><g transform="translate(756.1 191.7) rotate(-0.5)"><g class="root"><path d="M-13.95 -23.2C-1.95 -69.87 1.65 -69.87 13.65 -23.2"/></g><g class="crown"><rect x="-23.65" y="-23.7" width="47.3" height="47.4" rx="4"/><rect x="-14.19" y="-14.22" width="28.38" height="28.44" rx="5"/><path class="cl" d="M-22.65 -22.7L-12.69 -12.72M-22.65 22.7L-12.69 12.72M22.65 -22.7L12.69 -12.72M22.65 22.7L12.69 12.72"/></g></g><g transform="translate(702.7 194.4) rotate(-4.2)"><g class="root"><path d="M-15.8 -25.3C-1.7 -76.9 1.9 -76.9 16 -25.3"/></g><g class="crown"><rect x="-26.8" y="-25.8" width="53.6" height="51.6" rx="4"/><rect x="-16.08" y="-15.48" width="32.16" height="30.96" rx="5"/><path class="cl" d="M-25.8 -24.8L-14.58 -13.98M-25.8 24.8L-14.58 13.98M25.8 -24.8L14.58 -13.98M25.8 24.8L14.58 13.98"/></g></g><g transform="translate(642.6 201.3) rotate(-9.3)"><g class="root"><path d="M-17.5 -26.4C-1.55 -82.4 2.05 -82.4 18 -26.4"/></g><g class="crown"><rect x="-29.9" y="-26.9" width="59.8" height="53.8" rx="4"/><rect x="-17.94" y="-16.14" width="35.88" height="32.28" rx="5"/><path class="cl" d="M-28.9 -25.9L-16.44 -14.64M-28.9 25.9L-16.44 14.64M28.9 -25.9L16.44 -14.64M28.9 25.9L16.44 14.64"/></g></g><g transform="translate(574.9 216.4) rotate(-16.8)"><g class="root"><path d="M-23.4 -28.05C-13.4 -86.05 -9.8 -86.05 0.2 -28.05"/><path d="M0.2 -28.05C10.15 -86.05 13.75 -86.05 23.7 -28.05"/></g><g class="crown"><rect x="-32.7" y="-28.55" width="65.4" height="57.1" rx="4"/><rect x="-19.62" y="-17.13" width="39.24" height="34.26" rx="5"/><path class="cl" d="M-31.7 -27.55L-18.12 -15.63M-31.7 27.55L-18.12 15.63M31.7 -27.55L18.12 -15.63M31.7 27.55L18.12 15.63"/></g></g><g transform="translate(502.8 244.4) rotate(-27.8)"><g class="root"><path d="M-20.8 -29.45C-0.75 -88.78 2.85 -88.78 22.9 -29.45"/></g><g class="crown"><rect x="-35.7" y="-29.95" width="71.4" height="59.9" rx="4"/><rect x="-21.42" y="-17.97" width="42.84" height="35.94" rx="5"/><path class="cl" d="M-34.7 -28.95L-19.92 -16.47M-34.7 28.95L-19.92 16.47M34.7 -28.95L19.92 -16.47M34.7 28.95L19.92 16.47"/></g></g><g transform="translate(435.5 291.8) rotate(-43.5)"><g class="root"><path d="M-31.7 -29.4C-17.5 -91.4 -13.9 -91.4 0.3 -29.4"/><path d="M0.3 -29.4C14.25 -91.4 17.85 -91.4 31.8 -29.4"/><path d="M0.3 -29.4L-9.29 -63.87L-8.16 -67.96L-7.09 -71.62L-6.06 -74.85L-5.07 -77.65L-4.12 -80.02L-3.2 -81.96L-2.31 -83.46L-1.43 -84.54L-0.56 -85.18L0.3 -85.4L1.16 -85.18L2.03 -84.54L2.91 -83.46L3.8 -81.96L4.72 -80.02L5.67 -77.65L6.66 -74.85L7.69 -71.62L8.76 -67.96L9.89 -63.87Z"/><path class="mid" d="M-9.29 -63.87L0.3 -29.4M0.3 -29.4L9.89 -63.87"/></g><g class="crown"><rect x="-38.9" y="-29.9" width="77.8" height="59.8" rx="4"/><rect x="-23.34" y="-17.94" width="46.68" height="35.88" rx="5"/><path class="cl" d="M-37.9 -28.9L-21.84 -16.44M-37.9 28.9L-21.84 16.44M37.9 -28.9L21.84 -16.44M37.9 28.9L21.84 16.44"/></g></g><g transform="translate(383.5 363.8) rotate(-63.9)"><g class="root"><path d="M-34 -29.7C-18.9 -92.37 -15.3 -92.37 -0.2 -29.7"/><path d="M-0.2 -29.7C15.15 -92.37 18.75 -92.37 34.1 -29.7"/><path d="M-0.2 -29.7L-9.79 -64.48L-8.66 -68.61L-7.59 -72.3L-6.56 -75.56L-5.57 -78.38L-4.62 -80.77L-3.7 -82.73L-2.81 -84.25L-1.93 -85.33L-1.06 -85.98L-0.2 -86.2L0.66 -85.98L1.53 -85.33L2.41 -84.25L3.3 -82.73L4.22 -80.77L5.17 -78.38L6.16 -75.56L7.19 -72.3L8.26 -68.61L9.39 -64.48Z"/><path class="mid" d="M-9.79 -64.48L-0.2 -29.7M-0.2 -29.7L9.39 -64.48"/></g><g class="crown"><rect x="-41.9" y="-30.2" width="83.8" height="60.4" rx="4"/><rect x="-25.14" y="-18.12" width="50.28" height="36.24" rx="5"/><path class="cl" d="M-40.9 -29.2L-23.64 -16.62M-40.9 29.2L-23.64 16.62M40.9 -29.2L23.64 -16.62M40.9 29.2L23.64 16.62"/></g></g><g transform="translate(356.7 457.1) rotate(-82.8)"><g class="root"><path d="M-37.4 -30.5C-20.7 -93.83 -17.1 -93.83 -0.4 -30.5"/><path d="M-0.4 -30.5C16.4 -93.83 20 -93.83 36.8 -30.5"/><path d="M-0.4 -30.5L-9.99 -65.59L-8.86 -69.75L-7.79 -73.48L-6.76 -76.76L-5.77 -79.61L-4.82 -82.02L-3.9 -83.99L-3.01 -85.53L-2.13 -86.62L-1.26 -87.28L-0.4 -87.5L0.46 -87.28L1.33 -86.62L2.21 -85.53L3.1 -83.99L4.02 -82.02L4.97 -79.61L5.96 -76.76L6.99 -73.48L8.06 -69.75L9.19 -65.59Z"/><path class="mid" d="M-9.99 -65.59L-0.4 -30.5M-0.4 -30.5L9.19 -65.59"/></g><g class="crown"><rect x="-45.9" y="-31" width="91.8" height="62" rx="4"/><rect x="-27.54" y="-18.6" width="55.08" height="37.2" rx="5"/><path class="cl" d="M-44.9 -30L-26.04 -17.1M-44.9 30L-26.04 17.1M44.9 -30L26.04 -17.1M44.9 30L26.04 17.1"/></g></g></g>
</g>
<div class="grp" style="left:1320px;top:118px;width:210px;height:144px;"></div>
<div class="t" style="left:1333.5px;top:111px;font-size:13.5px;line-height:16.2px;color:#7d0000;font-weight:bold;font-style:normal;background:#eeefe8;padding:0 4px;margin-left:-4px;">Inne</div>
<div class="btn en" style="left:1331px;top:134px;width:188px;height:25px;"></div>
<div class="t" style="left:1235px;top:140px;width:400px;text-align:center;font-size:12px;line-height:14.4px;color:#707084;font-weight:normal;text-shadow:1px 1px 0 #fff;">Przywróć</div>
<svg style="position:absolute;left:1333px;top:134px" width="24" height="24"><path d="M4.2 9.5L10.4 3.4V6.4H13.6L17.6 10.6V16.6L13.6 20.6L12.3 19.5L14.8 16.6V13L12.2 10.4H10.4V15.8Z" fill="#fff" stroke="#9a9a9a" stroke-width="1"/><path d="M5 10.2H12.5L14.8 13V15L12.2 12.5H10.4V15.8Z" fill="#9e9e9e"/></svg>
<div class="btn en" style="left:1331px;top:165px;width:188px;height:25px;"></div>
<div class="t" style="left:1225px;top:171px;width:400px;text-align:center;font-size:12px;line-height:14.4px;color:#707084;font-weight:normal;text-shadow:1px 1px 0 #fff;">Komentarz</div>
<div class="btn en" style="left:1331px;top:196px;width:188px;height:25px;"></div>
<div class="t" style="left:1235px;top:202px;width:400px;text-align:center;font-size:12px;line-height:14.4px;color:#707084;font-weight:normal;text-shadow:1px 1px 0 #fff;">Dodaj RTG</div>
<svg style="position:absolute;left:1340px;top:201px" width="10" height="14"><g fill="#8a8a8a"><rect x="0" y="0" width="4" height="2"/><rect x="6" y="0" width="4" height="2"/><rect x="4" y="1" width="2" height="1"/><rect x="2" y="2" width="2" height="1"/><rect x="6" y="2" width="2" height="1"/><rect x="0" y="3" width="1.6" height="10"/><rect x="8.4" y="3" width="1.6" height="10"/><rect x="2" y="4" width="2" height="1"/><rect x="6" y="4" width="2" height="1"/><rect x="1" y="5" width="1" height="1"/><rect x="8" y="5" width="1" height="1"/><rect x="2" y="6" width="2" height="1"/><rect x="6" y="6" width="2" height="1"/><rect x="1" y="7" width="1" height="1"/><rect x="8" y="7" width="1" height="1"/><rect x="2" y="8" width="2" height="1.6"/><rect x="6" y="8" width="2" height="1.6"/><rect x="4" y="10" width="2" height="1"/><rect x="2.2" y="12" width="1.6" height="1.5"/><rect x="6.2" y="12" width="1.6" height="1.5"/><rect x="1" y="9" width="1" height="1.5"/><rect x="8" y="9" width="1" height="1.5"/></g></svg>
<div class="btn dis" style="left:1331px;top:227px;width:188px;height:25px;"></div>
<div class="t" style="left:1225px;top:233px;width:400px;text-align:center;font-size:12px;line-height:14.4px;color:#707084;font-weight:normal;text-shadow:1px 1px 0 #fff;">Usuń zaznaczenie</div>
<div class="grp" style="left:1320px;top:273px;width:210px;height:175px;"></div>
<div class="t" style="left:1334px;top:267px;font-size:12.6px;line-height:15.12px;color:#7d0000;font-weight:bold;font-style:normal;background:#eeefe8;padding:0 4px;margin-left:-4px;">Wypełnienia</div>
<div class="btn dis" style="left:1331px;top:289px;width:188px;height:25px;"></div>
<div class="t" style="left:1225px;top:295px;width:400px;text-align:center;font-size:12px;line-height:14.4px;color:#707084;font-weight:normal;text-shadow:1px 1px 0 #fff;">Amalgamaty</div>
<div class="btn dis" style="left:1331px;top:320px;width:188px;height:25px;"></div>
<div class="t" style="left:1225px;top:326px;width:400px;text-align:center;font-size:12px;line-height:14.4px;color:#707084;font-weight:normal;text-shadow:1px 1px 0 #fff;">Kompozyty</div>
<div class="btn dis" style="left:1331px;top:351px;width:188px;height:25px;"></div>
<div class="t" style="left:1225px;top:357px;width:400px;text-align:center;font-size:12px;line-height:14.4px;color:#707084;font-weight:normal;text-shadow:1px 1px 0 #fff;">Złote</div>
<div class="btn dis" style="left:1331px;top:382px;width:188px;height:25px;"></div>
<div class="t" style="left:1225px;top:388px;width:400px;text-align:center;font-size:12px;line-height:14.4px;color:#707084;font-weight:normal;text-shadow:1px 1px 0 #fff;">Inlay / Onlay</div>
<div class="btn dis" style="left:1331px;top:413px;width:188px;height:25px;"></div>
<div class="t" style="left:1225px;top:419px;width:400px;text-align:center;font-size:12px;line-height:14.4px;color:#707084;font-weight:normal;text-shadow:1px 1px 0 #fff;">Glass - jonomerowe</div>
<div class="grp" style="left:1320px;top:459px;width:210px;height:113px;"></div>
<div class="t" style="left:1334.2px;top:453px;font-size:12.4px;line-height:14.88px;color:#7d0000;font-weight:bold;font-style:normal;background:#eeefe8;padding:0 4px;margin-left:-4px;">Uzupełnienia</div>
<div class="btn dis" style="left:1331px;top:475px;width:188px;height:25px;"></div>
<div class="t" style="left:1225px;top:481px;width:400px;text-align:center;font-size:12px;line-height:14.4px;color:#707084;font-weight:normal;text-shadow:1px 1px 0 #fff;">Proteza</div>
<div class="btn dis" style="left:1331px;top:506px;width:188px;height:25px;"></div>
<div class="t" style="left:1225px;top:512px;width:400px;text-align:center;font-size:12px;line-height:14.4px;color:#707084;font-weight:normal;text-shadow:1px 1px 0 #fff;">Korona</div>
<div class="btn dis" style="left:1331px;top:537px;width:188px;height:25px;"></div>
<div class="t" style="left:1225px;top:543px;width:400px;text-align:center;font-size:12px;line-height:14.4px;color:#707084;font-weight:normal;text-shadow:1px 1px 0 #fff;">Most</div>
<div class="chk" style="left:1536px;top:117px;width:14px;height:14px;"></div>
<div class="t" style="left:1556.4px;top:118px;font-size:12px;line-height:14.4px;color:#000;font-weight:normal;font-style:normal;letter-spacing:-0.205px;">Uzębienie mleczne</div>
<div class="chk" style="left:1536px;top:138px;width:14px;height:14px;"></div>
<div class="chkg" style="left:1540px;top:142px;width:6px;height:6px;"></div>
<div class="t" style="left:1556.4px;top:139px;font-size:12px;line-height:14.4px;color:#000;font-weight:normal;font-style:normal;letter-spacing:-0.204px;">Uzębienie stałe</div>
<div class="btn en" style="left:1731px;top:112px;width:168px;height:25px;"></div>
<div class="t" style="left:1769.2px;top:118px;font-size:12px;line-height:14.4px;color:#000;font-weight:normal;font-style:normal;letter-spacing:-0.132px;">Badania obrazowe</div>
<svg style="position:absolute;left:1740px;top:117px" width="10" height="14"><g fill="#111"><rect x="0" y="0" width="4" height="2"/><rect x="6" y="0" width="4" height="2"/><rect x="4" y="1" width="2" height="1"/><rect x="2" y="2" width="2" height="1"/><rect x="6" y="2" width="2" height="1"/><rect x="0" y="3" width="1.6" height="10"/><rect x="8.4" y="3" width="1.6" height="10"/><rect x="2" y="4" width="2" height="1"/><rect x="6" y="4" width="2" height="1"/><rect x="1" y="5" width="1" height="1"/><rect x="8" y="5" width="1" height="1"/><rect x="2" y="6" width="2" height="1"/><rect x="6" y="6" width="2" height="1"/><rect x="1" y="7" width="1" height="1"/><rect x="8" y="7" width="1" height="1"/><rect x="2" y="8" width="2" height="1.6"/><rect x="6" y="8" width="2" height="1.6"/><rect x="4" y="10" width="2" height="1"/><rect x="2.2" y="12" width="1.6" height="1.5"/><rect x="6.2" y="12" width="1.6" height="1.5"/><rect x="1" y="9" width="1" height="1.5"/><rect x="8" y="9" width="1" height="1.5"/></g><rect x="2" y="10.5" width="6" height="3" fill="#888" opacity="0.6"/></svg>
<div class="" style="left:1885px;top:114px;width:1px;height:20px;position:absolute;background:#9a9a8a"></div>
<svg style="position:absolute;left:1890px;top:129px" width="6" height="4"><path d="M0 0H6L3 3.5z" fill="#000"/></svg>
<div class="btn en" style="left:1731px;top:143px;width:168px;height:25px;"></div>
<div class="t" style="left:1615px;top:149px;width:400px;text-align:center;font-size:12px;line-height:14.4px;color:#000;font-weight:normal;">Jama ustna</div>
<div class="btn en" style="left:1731px;top:174px;width:168px;height:38px;"></div>
<div class="t" style="left:1618px;top:180px;width:400px;text-align:center;font-size:12px;line-height:14.4px;color:#000;font-weight:normal;">Zaburzenia</div>
<div class="t" style="left:1618px;top:194px;width:400px;text-align:center;font-size:12px;line-height:14.4px;color:#000;font-weight:normal;">ortodontyczne</div>
<div class="grp" style="left:1533px;top:232px;width:367px;height:675px;"></div>
<div class="t" style="left:1547px;top:226px;font-size:12.35px;line-height:14.82px;color:#7d0000;font-weight:bold;font-style:normal;background:#eeefe8;padding:0 4px;margin-left:-4px;">Szczegóły</div>
<div style="position:absolute;left:1543px;top:247px;width:347px;height:650px;box-sizing:border-box;border:1px solid #8a9465;background:#fff"></div>
<div style="position:absolute;left:1544px;top:248px;width:345px;height:19px;box-sizing:border-box;background:linear-gradient(#f0f0ee 70%,#e6e6e0);border-bottom:1px solid #7f8a5a"></div>
<div class="" style="left:1657px;top:251px;width:1px;height:14px;position:absolute;background:#8f9477"></div>
<div class="" style="left:1708px;top:251px;width:1px;height:14px;position:absolute;background:#8f9477"></div>
<div class="t" style="left:1400.5px;top:251px;width:400px;text-align:center;font-size:12px;line-height:14.4px;color:#000;font-weight:normal;">Data</div>
<div class="t" style="left:1483px;top:251px;width:400px;text-align:center;font-size:12px;line-height:14.4px;color:#000;font-weight:normal;">Ząb</div>
<div class="t" style="left:1598.5px;top:251px;width:400px;text-align:center;font-size:12px;line-height:14.4px;color:#000;font-weight:normal;">Świadczenie</div>
<div class="chk" style="left:16px;top:921px;width:14px;height:14px;"></div>
<div class="chkg" style="left:20px;top:925px;width:6px;height:6px;"></div>
<div class="t" style="left:36px;top:922px;font-size:12px;line-height:14.4px;color:#000;font-weight:normal;font-style:normal;letter-spacing:-0.306px;">Rozpoznanie</div>
<div class="chk" style="left:112px;top:921px;width:14px;height:14px;"></div>
<div class="t" style="left:131.6px;top:922px;font-size:12px;line-height:14.4px;color:#000;font-weight:normal;font-style:normal;letter-spacing:0.329px;">Procedury / produkty</div>
<div style="position:absolute;left:1333px;top:918px;width:22px;height:21px;box-sizing:border-box;border:1px solid #9a9c80;border-radius:2px;background:#a8ad88"></div>
<div style="position:absolute;left:1335px;top:920px;width:18px;height:17px;box-sizing:border-box;border:1px dotted #333;background:#f4f4ee"></div>
<svg style="position:absolute;left:1337px;top:922px" width="14" height="12"><path d="M2 9L7 4L12 9" stroke="#000" stroke-width="2.4" fill="none"/></svg>
<div class="btn en" style="left:1449px;top:916px;width:85px;height:25px;"></div>
<div class="t" style="left:1477.2px;top:922px;font-size:12px;line-height:14.4px;color:#000;font-weight:normal;font-style:normal;letter-spacing:0.1px;">eRecepty</div>
<div class="btn en" style="left:1540px;top:916px;width:61px;height:25px;"></div>
<div class="t" style="left:1568.3px;top:922px;font-size:12px;line-height:14.4px;color:#000;font-weight:normal;font-style:normal;letter-spacing:-0.297px;">eZLA</div>
<div class="btn en" style="left:1607px;top:916px;width:76px;height:25px;"></div>
<div class="t" style="left:1635.3px;top:922px;font-size:12px;line-height:14.4px;color:#000;font-weight:normal;font-style:normal;letter-spacing:0.084px;">Druki ...</div>
<div class="btn en" style="left:1689px;top:916px;width:83px;height:25px;"></div>
<div class="t" style="left:1717.4px;top:922px;font-size:12px;line-height:14.4px;color:#000;font-weight:normal;font-style:normal;letter-spacing:-0.337px;">Zalecenia</div>
<div class="btn en" style="left:1778px;top:916px;width:121px;height:25px;"></div>
<div class="t" style="left:1806.4px;top:922px;font-size:12px;line-height:14.4px;color:#000;font-weight:normal;font-style:normal;letter-spacing:-0.076px;">Następna wizyta</div>
<div class="btn en" style="left:1366px;top:952px;width:98px;height:25px;"></div>
<div class="t" style="left:1394.2px;top:958px;font-size:12px;line-height:14.4px;color:#000;font-weight:normal;font-style:normal;letter-spacing:-0.116px;">Skierowanie</div>
<div class="btn en" style="left:1470px;top:952px;width:173px;height:25px;"></div>
<div class="t" style="left:1497.6px;top:958px;font-size:12px;line-height:14.4px;color:#000;font-weight:normal;font-style:normal;letter-spacing:0px;">Zamknij bez zatwierdzania</div>
<div class="btn en" style="left:1649px;top:952px;width:135px;height:25px;"></div>
<div class="t" style="left:1676.9px;top:958px;font-size:12px;line-height:14.4px;color:#000;font-weight:normal;font-style:normal;letter-spacing:-0.028px;">Zatwierdź i zamknij</div>
<div class="btn en" style="left:1790px;top:952px;width:109px;height:25px;"></div>
<div class="t" style="left:1839.2px;top:958px;font-size:12px;line-height:14.4px;color:#000;font-weight:normal;font-style:normal;letter-spacing:0.023px;">Anuluj</div>
<svg style="position:absolute;left:1452px;top:916px" width="24" height="24"><rect x="9" y="4" width="5" height="3" rx="1" fill="#d4d4d4"/><path d="M10.5 7H12.5L14 8.5V10L16 11.5V20H7V11.5L9 10V8.5Z" fill="#8e5a2a"/><path d="M8 12V19" stroke="#b07a44" stroke-width="2"/><rect x="12" y="12.3" width="4" height="4.6" fill="#fff"/><path d="M13 13.7H16M13 15.7H16" stroke="#222" stroke-width="0.9"/><circle cx="9" cy="18" r="2.6" fill="#f7d000"/><circle cx="7.5" cy="18" r="1.6" fill="#ff8a10"/></svg>
<svg style="position:absolute;left:1548px;top:920px" width="15" height="17"><rect x="0.5" y="0.5" width="10" height="15" fill="#f6f6f6" stroke="#d0d0d0" stroke-width="0.8"/><path d="M2 3H8M2 5H8M2 7H6M2 9H7" stroke="#444" stroke-width="0.9"/><path d="M5 14L12 7" stroke="#6a8aa8" stroke-width="1.8"/><path d="M4 15L5.5 13.5" stroke="#aac" stroke-width="1.5"/></svg>
<svg style="position:absolute;left:1615px;top:920px" width="12" height="17"><rect x="0.5" y="0.5" width="11" height="15" fill="#f4f4f4" stroke="#e0e0e0" stroke-width="0.7"/><path d="M3 3H9M2 5.5H8M3 8H9M2 10.5H8M3 13H7" stroke="#1a6ee0" stroke-width="1"/><path d="M2 3V4M9 5.5V6.5M2 8V9M9 10.5V11.5M2 13V14" stroke="#1a6ee0" stroke-width="1"/></svg>
<svg style="position:absolute;left:1697px;top:920px" width="12" height="17"><rect x="0.5" y="0.5" width="11" height="15" fill="#f4f4f4" stroke="#e0e0e0" stroke-width="0.7"/><path d="M3 3H9M2 5.5H8M3 8H9M2 10.5H8M3 13H7" stroke="#1a6ee0" stroke-width="1"/><path d="M2 3V4M9 5.5V6.5M2 8V9M9 10.5V11.5M2 13V14" stroke="#1a6ee0" stroke-width="1"/></svg>
<svg style="position:absolute;left:1784px;top:921px" width="17" height="16"><rect x="0.6" y="0.6" width="15" height="14" fill="#fff" stroke="#8a5a30" stroke-width="1.2"/><g fill="#666"><rect x="4" y="2" width="1.2" height="1.2" rx="0.5"/><rect x="4" y="4" width="1.2" height="1.2" rx="0.5"/><rect x="4" y="6" width="1.2" height="1.2" rx="0.5"/><rect x="4" y="8" width="1.2" height="1.2" rx="0.5"/><rect x="4" y="10" width="1.2" height="1.2" rx="0.5"/><rect x="4" y="12" width="1.2" height="1.2" rx="0.5"/><rect x="6" y="2" width="1.2" height="1.2" rx="0.5"/><rect x="6" y="4" width="1.2" height="1.2" rx="0.5"/><rect x="6" y="6" width="1.2" height="1.2" rx="0.5"/><rect x="6" y="8" width="1.2" height="1.2" rx="0.5"/><rect x="6" y="10" width="1.2" height="1.2" rx="0.5"/><rect x="6" y="12" width="1.2" height="1.2" rx="0.5"/><rect x="8" y="2" width="1.2" height="1.2" rx="0.5"/><rect x="8" y="4" width="1.2" height="1.2" rx="0.5"/><rect x="8" y="6" width="1.2" height="1.2" rx="0.5"/><rect x="8" y="8" width="1.2" height="1.2" rx="0.5"/><rect x="8" y="10" width="1.2" height="1.2" rx="0.5"/><rect x="10" y="2" width="1.2" height="1.2" rx="0.5"/><rect x="10" y="4" width="1.2" height="1.2" rx="0.5"/><rect x="10" y="6" width="1.2" height="1.2" rx="0.5"/><rect x="10" y="8" width="1.2" height="1.2" rx="0.5"/><rect x="10" y="10" width="1.2" height="1.2" rx="0.5"/><rect x="12" y="2" width="1.2" height="1.2" rx="0.5"/><rect x="12" y="4" width="1.2" height="1.2" rx="0.5"/><rect x="12" y="6" width="1.2" height="1.2" rx="0.5"/><rect x="12" y="8" width="1.2" height="1.2" rx="0.5"/><rect x="12" y="10" width="1.2" height="1.2" rx="0.5"/></g><g fill="#f00"><rect x="1.5" y="2" width="2" height="1"/><rect x="1.5" y="4" width="2" height="1"/><rect x="1.5" y="6" width="2" height="1"/><rect x="1.5" y="8" width="2" height="1"/><rect x="1.5" y="10" width="2" height="1"/><rect x="1.5" y="12" width="2" height="1"/></g></svg>
<svg style="position:absolute;left:1372px;top:956px" width="16" height="16"><rect x="0.5" y="0.5" width="15" height="15" rx="1.5" fill="#fff" stroke="#555"/><path d="M1.8 10L8 3.6L14.2 10Z" fill="#0a7ad0"/><path d="M2 11.5H14" stroke="#e6e6e6" stroke-width="1"/></svg>
<svg style="position:absolute;left:1476px;top:956px" width="16" height="16"><rect x="0.5" y="0.5" width="15" height="15" rx="1.5" fill="#d8d8d8" stroke="#555"/><rect x="2" y="2" width="12" height="12" fill="#22aa22"/><circle cx="8" cy="8" r="5" fill="#fff"/><circle cx="8" cy="8" r="3.2" fill="#55cc33"/></svg>
<svg style="position:absolute;left:1655px;top:956px" width="16" height="16"><rect x="0.5" y="0.5" width="15" height="15" rx="1.5" fill="#3cb83c" stroke="#444"/><path d="M3 8L6.5 12L13 3.5" stroke="#000" stroke-width="2.4" fill="none"/></svg>
<svg style="position:absolute;left:1796px;top:956px" width="16" height="16"><rect x="0.5" y="0.5" width="15" height="15" rx="1.5" fill="#e8101e" stroke="#555"/><path d="M3.5 3.5L12.5 12.5M12.5 3.5L3.5 12.5" stroke="#fff" stroke-width="2.4"/></svg>
<svg style="position:absolute;left:5px;top:9px" width="16" height="17"><rect x="0.5" y="0.5" width="12" height="15" fill="#fff" stroke="#7a5a3a"/><g fill="#888"><rect x="2" y="2" width="1" height="1"/><rect x="2" y="4" width="1" height="1"/><rect x="2" y="6" width="1" height="1"/><rect x="2" y="8" width="1" height="1"/><rect x="4" y="2" width="1" height="1"/><rect x="4" y="4" width="1" height="1"/><rect x="4" y="6" width="1" height="1"/><rect x="4" y="8" width="1" height="1"/><rect x="6" y="2" width="1" height="1"/><rect x="6" y="4" width="1" height="1"/><rect x="6" y="6" width="1" height="1"/><rect x="6" y="8" width="1" height="1"/><rect x="8" y="2" width="1" height="1"/><rect x="8" y="4" width="1" height="1"/><rect x="8" y="6" width="1" height="1"/><rect x="8" y="8" width="1" height="1"/><rect x="10" y="2" width="1" height="1"/><rect x="10" y="4" width="1" height="1"/><rect x="10" y="6" width="1" height="1"/><rect x="10" y="8" width="1" height="1"/></g><circle cx="4" cy="10" r="1.6" fill="none" stroke="#e00" stroke-width="1"/><rect x="9" y="10" width="5" height="6" fill="#9a7fd0"/><rect x="7" y="11" width="3" height="5" fill="#a8d8a8"/></svg>
<svg style="position:absolute;left:108px;top:10px" width="18" height="17"><path d="M7 0H11V6H17V7.2H11V16H7V9.8H1V6H7Z" fill="#e80000"/><rect x="10.5" y="7.5" width="6.5" height="8.5" fill="#f6f6f6"/><path d="M12 10H15M12 12H15M12 14H15" stroke="#333" stroke-width="0.9"/></svg>
<svg style="position:absolute;left:278px;top:10px" width="10" height="16"><path d="M0 3.5L4 0V16H0Z" fill="#f5b800"/><rect x="3.5" y="4.5" width="5.5" height="11" fill="#fff" stroke="#f5b800" stroke-width="1"/><path d="M3 7H7M3 9H5M3 11H7M3 13H5" stroke="#222" stroke-width="0.9"/><path d="M0 4L4 0.5V15L0 15.8Z" fill="#f5be20"/></svg>
<svg style="position:absolute;left:438px;top:10px" width="12" height="16"><rect x="0.5" y="0.5" width="11" height="15" fill="#f6f6f8" stroke="#e0e0e4" stroke-width="0.8"/><path d="M2 3H3.5M5 3H9.5M5 5H8" stroke="#444" stroke-width="0.9"/><rect x="2" y="8" width="7.5" height="4.5" fill="#fff" stroke="#555" stroke-width="0.9"/><path d="M3 11.5L5 9L7 11.5L8.5 10" stroke="#e00" stroke-width="0.9" fill="none"/></svg>
<svg style="position:absolute;left:538px;top:10px" width="12" height="16"><rect x="0.5" y="0.5" width="11" height="15" fill="#f2f2f4" stroke="#e2e2e6" stroke-width="0.8"/><path d="M2 3.2H9.5M2 6.2H7M2 9.2H9.5M2 12.2H5" stroke="#0a64f0" stroke-width="1.1"/><path d="M4.5 2V3M7.5 3V4M2.5 5V6M5 5V6M4.5 8V9M7.5 8V9M2.5 11V12" stroke="#0a64f0" stroke-width="1"/></svg>
<svg style="position:absolute;left:688px;top:10px" width="15" height="16"><rect x="0.5" y="0.5" width="11" height="14" fill="#f4f4f6"/><rect x="2.5" y="2.5" width="11" height="13" fill="#f8f8fa"/><path d="M1 1.5H10.5" stroke="#555" stroke-width="1"/><g fill="#666"><rect x="0.8" y="2.5" width="1" height="1"/><rect x="0.8" y="4.5" width="1" height="1"/><rect x="0.8" y="6.5" width="1" height="1"/><rect x="0.8" y="8.5" width="1" height="1"/><rect x="0.8" y="10.5" width="1" height="1"/><rect x="2.8" y="3.5" width="1" height="1"/><rect x="2.8" y="5.5" width="1" height="1"/><rect x="2.8" y="7.5" width="1" height="1"/><rect x="2.8" y="9.5" width="1" height="1"/><rect x="2.8" y="11.5" width="1" height="1"/></g><path d="M4.5 5.5H13M4.5 7.5H13M4.5 9.5H13M4.5 11.5H13M4.5 13.5H13" stroke="#555" stroke-width="0.9"/></svg>
<svg style="position:absolute;left:789px;top:10px" width="16" height="17"><rect x="0" y="0" width="12" height="16" fill="#e8c474"/><path d="M3 3.5H9" stroke="#444" stroke-width="1"/><rect x="2" y="11" width="5" height="3" fill="#f8f8ff"/><rect x="7" y="12" width="3" height="4" fill="#bfe6c6"/><rect x="11" y="12" width="3.5" height="4" fill="#8a60e0"/><rect x="7" y="7.5" width="3" height="2.5" fill="#5a3010"/><rect x="11" y="7.5" width="3" height="2.5" fill="#5a3010"/><rect x="7.5" y="9.5" width="2" height="2" fill="#f0c090"/><rect x="11.5" y="9.5" width="2" height="2" fill="#f0c090"/></svg>
<svg style="position:absolute;left:889px;top:10px" width="16" height="17"><rect x="0" y="0" width="12" height="16" fill="#e8c474"/><path d="M3 3.5H9" stroke="#444" stroke-width="1"/><rect x="2" y="11" width="5" height="3" fill="#f8f8ff"/><rect x="7" y="12" width="3" height="4" fill="#bfe6c6"/><rect x="11" y="12" width="3.5" height="4" fill="#8a60e0"/><rect x="7" y="7.5" width="3" height="2.5" fill="#5a3010"/><rect x="11" y="7.5" width="3" height="2.5" fill="#5a3010"/><rect x="7.5" y="9.5" width="2" height="2" fill="#f0c090"/><rect x="11.5" y="9.5" width="2" height="2" fill="#f0c090"/></svg>
<svg style="position:absolute;left:992px;top:10px" width="17" height="16"><rect x="0" y="0" width="16" height="16" fill="#fff"/><path d="M4.5 2V13" stroke="#aaa" stroke-width="1.2"/><path d="M7 2H10V5" stroke="#ddd" stroke-width="0.8" fill="none"/><path d="M5 13L11 1.5" stroke="#1a70f0" stroke-width="1.6"/><path d="M11 14V11.5" stroke="#777" stroke-width="0.8"/></svg>
<svg style="position:absolute;left:1092px;top:10px" width="17" height="17"><rect x="0.5" y="0.5" width="11" height="12" fill="#fff" stroke="#999" stroke-width="0.8"/><rect x="2.5" y="2.5" width="11" height="12" fill="#fff" stroke="#999" stroke-width="0.8"/><rect x="4.5" y="4.5" width="11" height="11" fill="#fff" stroke="#888" stroke-width="0.9"/><path d="M6.5 7H13.5M6.5 9.2H13.5M6.5 11.4H13.5M6.5 13.6H13.5" stroke="#444" stroke-width="0.9"/></svg>
<svg style="position:absolute;left:0;top:0" width="1909" height="989"><defs><filter id="sh2" x="-30%" y="-10%" width="160%" height="130%"><feGaussianBlur in="SourceAlpha" stdDeviation="3"/><feOffset dx="4" dy="2"/><feComponentTransfer><feFuncA type="linear" slope="0.42"/></feComponentTransfer><feMerge><feMergeNode/><feMergeNode in="SourceGraphic"/></feMerge></filter></defs><path d="M1057.49 469.32L1322.49 893.5L1316.54 894.58L1340.3 910L1336.24 881.96L1332.77 886.92L1058.51 468.68Z" fill="#fe2a6a" filter="url(#sh2)"/></svg>
</body></html>
